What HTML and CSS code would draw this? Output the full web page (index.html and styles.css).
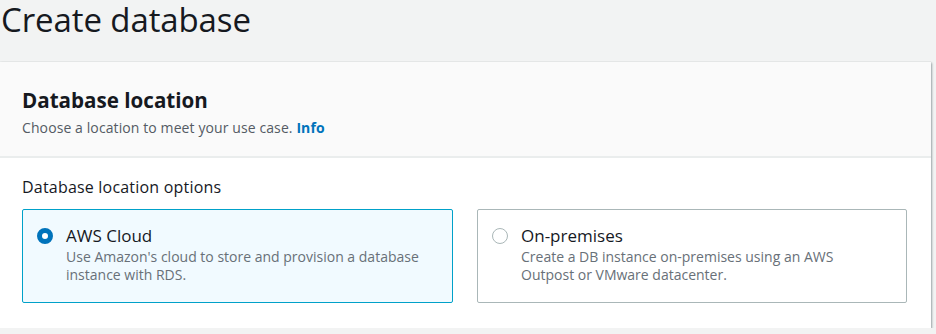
FILE: index.html
```html
<!DOCTYPE html>
<html lang="en">
  <head>
    <meta charset="UTF-8" />
    <meta name="viewport" content="width=device-width, initial-scale=1.0" />
    <title>Create database</title>
    <link rel="stylesheet" href="styles.css">
  </head>
  <body>
    <h1 class="page-title">Create database</h1>
    <div class="panel">
      <div class="panel-header">
        <h2>Database location</h2>
        <p class="desc">Choose a location to meet your use case. <a href="#" class="info">Info</a></p>
      </div>
      <div class="panel-body">
        <div class="field-label">Database location options</div>
        <div class="tiles">
          <label class="tile selected">
            <span class="radio checked"></span>
            <span class="tile-text">
              <span class="tile-title">AWS Cloud</span>
              <span class="tile-desc">Use Amazon's cloud to store and provision a database instance with RDS.</span>
            </span>
          </label>
          <label class="tile">
            <span class="radio"></span>
            <span class="tile-text">
              <span class="tile-title">On-premises</span>
              <span class="tile-desc">Create a DB instance on-premises using an AWS Outpost or VMware datacenter.</span>
            </span>
          </label>
        </div>
      </div>
    </div>
  </body>
</html>
```

FILE: styles.css
```css
body {
  margin: 0;
  background: #f2f3f3;
  font-family: "Open Sans", "Noto Sans", sans-serif;
  color: #16191f;
}
.page-title {
  margin: 0;
  padding: 0 0 0 1px;
  height: 62px;
  font-size: 33px;
  font-weight: 400;
  line-height: 40px;
  letter-spacing: -0.1px;
}
.panel {
  width: 931px;
  background: #fff;
  box-shadow: 1px 1px 2px rgba(0, 28, 36, 0.35), 0 0 1px rgba(0, 28, 36, 0.2);
}
.panel-header {
  background: #fafafa;
  height: 96px;
  box-sizing: border-box;
  padding: 24px 22px 0;
  border-bottom: 2px solid #eaeded;
}
.panel-header h2 {
  margin: 0;
  font-size: 20.6px;
  font-weight: 700;
  line-height: 28px;
}
.desc {
  margin: 4px 0 0;
  font-size: 14px;
  color: #545b64;
  line-height: 20px;
  letter-spacing: 0.1px;
}
.info {
  color: #0073bb;
  font-weight: 700;
  text-decoration: none;
}
.panel-body {
  padding: 18px 22px 25px;
}
.field-label {
  font-size: 16px;
  line-height: 22px;
  letter-spacing: 0.2px;
  margin-bottom: 11px;
}
.tiles {
  display: grid;
  grid-template-columns: 431px 430px;
  gap: 24px;
}
.tile {
  display: flex;
  gap: 13px;
  height: 94px;
  box-sizing: border-box;
  padding: 15px 14px 0;
  border: 1px solid #aab7b8;
  border-radius: 2px;
}
.tile.selected {
  background: #f1faff;
  border-color: #00a1c9;
}
.radio {
  flex: none;
  width: 16px;
  height: 16px;
  margin-top: 3px;
  box-sizing: border-box;
  border: 1.5px solid #aab7b8;
  border-radius: 50%;
  background: #fff;
}
.radio.checked {
  border: 5px solid #0073bb;
}
.tile-text {
  display: flex;
  flex-direction: column;
}
.tile-title {
  font-size: 17px;
  line-height: 22px;
}
.tile-desc {
  max-width: 362px;
  margin-top: 1px;
  font-size: 14px;
  line-height: 18px;
  color: #687078;
}
```
